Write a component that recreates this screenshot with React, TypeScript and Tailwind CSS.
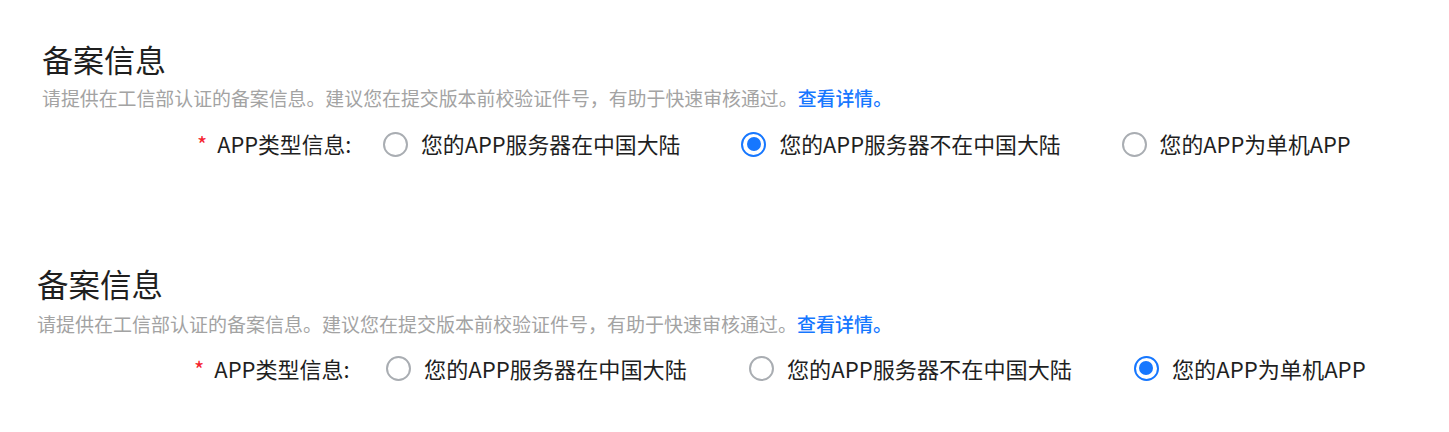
const font = { fontFamily: '"Noto Sans CJK SC", "Noto Sans", sans-serif' };

type Opt = { label: string; checked: boolean };

const Radio = ({ checked, size }: { checked: boolean; size: string }) => (
  <span
    className={`${size} shrink-0 rounded-full border-2 flex items-center justify-center bg-white ${
      checked ? "border-[#1677ff]" : "border-[#a9adb2]"
    }`}
  >
    {checked && <span className="h-[14px] w-[14px] rounded-full bg-[#1677ff]" />}
  </span>
);

const Section = ({
  options,
  wrap,
  title,
  sub,
  row,
  label,
  group,
  text,
  radio,
}: {
  options: Opt[];
  wrap: string;
  title: string;
  sub: string;
  row: string;
  label: string;
  group: string;
  text: string;
  radio: string;
}) => (
  <section className={wrap}>
    <h2 className={`${title} text-[#1f1f1f] font-normal`}>备案信息</h2>
    <p className={`${sub} text-[#a3a3a3]`}>
      请提供在工信部认证的备案信息。建议您在提交版本前校验证件号，有助于快速审核通过。
      <a className="text-[#1677ff] font-medium cursor-pointer">查看详情。</a>
    </p>
    <div className={`${row} flex items-center`}>
      <div className={`${label} flex items-center text-[#1f1f1f]`}>
        <span className="text-[#f5222d] mr-[10px]">*</span>
        <span>APP类型信息:</span>
      </div>
      <div className={`${group} flex items-center`}>
        {options.map((o, i) => (
          <label key={i} className="flex items-center gap-[13px] cursor-pointer">
            <Radio checked={o.checked} size={radio} />
            <span className={`${text} text-[#1f1f1f]`}>{o.label}</span>
          </label>
        ))}
      </div>
    </div>
  </section>
);

export default function App() {
  const labels = ["您的APP服务器在中国大陆", "您的APP服务器不在中国大陆", "您的APP为单机APP"];

  return (
    <div className="w-[1449px] h-[432px] bg-white overflow-hidden" style={font}>
      <Section
        options={labels.map((l, i) => ({ label: l, checked: i === 1 }))}
        wrap="pt-[39px] pl-[42px]"
        title="text-[31px] leading-[40px]"
        sub="mt-[7px] text-[18.9px] leading-[24px]"
        row="mt-[19px] h-[30px]"
        label="pl-[155px] w-[341px] text-[21.8px]"
        group="gap-[61px]"
        text="text-[21.85px] leading-[30px]"
        radio="h-[25px] w-[25px]"
      />
      <Section
        options={labels.map((l, i) => ({ label: l, checked: i === 2 }))}
        wrap="pt-[104px] pl-[37px]"
        title="text-[31.5px] leading-[40px]"
        sub="mt-[9px] text-[19px] leading-[24px]"
        row="mt-[17px] h-[30px]"
        label="pl-[157px] w-[349px] text-[22px]"
        group="gap-[62px]"
        text="text-[22.15px] leading-[30px]"
        radio="h-[25px] w-[25px]"
      />
    </div>
  );
}
